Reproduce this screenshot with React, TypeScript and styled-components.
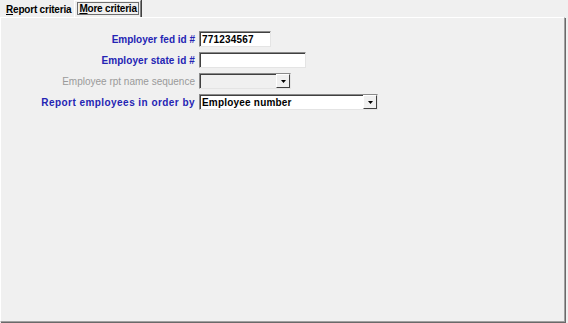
import React from "react";
import styled, { createGlobalStyle } from "styled-components";

const GlobalStyle = createGlobalStyle`
  html, body {
    margin: 0;
    padding: 0;
    background: #f0f0f0;
  }
  body {
    font-family: "Liberation Sans", Arial, sans-serif;
    font-size: 10px;
    width: 568px;
    height: 323px;
    overflow: hidden;
  }
`;

const Window = styled.div`
  width: 568px;
  height: 323px;
  display: flex;
  flex-direction: column;
  background: #f0f0f0;
`;

const TabBar = styled.div`
  display: flex;
  align-items: flex-end;
  height: 17px;
  padding-left: 2px;
`;

const Tab = styled.div<{ $active?: boolean }>`
  font-weight: bold;
  font-size: 10px;
  color: #000;
  padding: ${(p) => (p.$active ? "2px 2px 1px 3px" : "0 2px 1px 4px")};
  height: ${(p) => (p.$active ? "13px" : "12px")};
  line-height: 12px;
  margin-left: ${(p) => (p.$active ? "1px" : "0")};
  border: ${(p) => (p.$active ? "1px solid #808080" : "none")};
  border-left-color: #fff;
  border-top-color: #fff;
  border-bottom: none;
  box-shadow: ${(p) => (p.$active ? "1px 0 0 #404040" : "none")};
  letter-spacing: -0.2px;
  u {
    text-decoration: underline;
  }
`;

const Focus = styled.span`
  outline: 1px solid #707070;
  outline-offset: 0;
  padding: 0 1px;
`;

const Panel = styled.div`
  flex: 1;
  margin-right: 3px;
  margin-bottom: 1px;
  border-top: 1px solid #fff;
  border-left: 1px solid #fff;
  border-right: 1px solid #a0a0a0;
  border-bottom: 1px solid #a0a0a0;
  box-shadow: 1px 1px 0 #696969;
  padding-top: 13px;
`;

const Form = styled.div`
  display: grid;
  grid-template-columns: 194px auto;
  grid-auto-rows: 16px;
  column-gap: 4px;
  row-gap: 5px;
  align-items: center;
`;

const Label = styled.div<{ $disabled?: boolean; $spacing?: number }>`
  text-align: right;
  font-weight: ${(p) => (p.$disabled ? "normal" : "bold")};
  font-size: 10px;
  letter-spacing: ${(p) => p.$spacing ?? 0.2}px;
  color: ${(p) => (p.$disabled ? "#9a9a9a" : "#2424b4")};
  white-space: nowrap;
`;

const Field = styled.div<{ $width: number; $disabled?: boolean }>`
  width: ${(p) => p.$width}px;
  height: 16px;
  box-sizing: border-box;
  display: flex;
  align-items: center;
  background: ${(p) => (p.$disabled ? "#f0f0f0" : "#fff")};
  border-top: 1px solid #8a8a8a;
  border-left: 1px solid #8a8a8a;
  border-right: 1px solid #e4e4e4;
  border-bottom: 1px solid #e4e4e4;
  box-shadow: inset 1px 1px 0 #404040;
  padding-left: 2px;
  font-weight: bold;
  font-size: 10px;
  letter-spacing: 0.2px;
  color: #000;
`;

const Value = styled.span`
  flex: 1;
  white-space: nowrap;
  overflow: hidden;
`;

const ArrowButton = styled.div`
  width: 14px;
  height: 14px;
  box-sizing: border-box;
  display: flex;
  align-items: center;
  justify-content: center;
  background: #f0f0f0;
  border-top: 1px solid #fff;
  border-left: 1px solid #fff;
  border-right: 1px solid #404040;
  border-bottom: 1px solid #404040;
  svg {
    width: 5px;
    height: 3px;
    fill: #000;
  }
`;

const Arrow = () => (
  <ArrowButton>
    <svg viewBox="0 0 5 3">
      <polygon points="0,0 5,0 2.5,3" />
    </svg>
  </ArrowButton>
);

export default function App() {
  return (
    <Window>
      <GlobalStyle />
      <TabBar>
        <Tab>
          <u>R</u>eport criteria
        </Tab>
        <Tab $active>
          <Focus>
            <u>M</u>ore criteria
          </Focus>
        </Tab>
      </TabBar>
      <Panel>
        <Form>
          <Label $spacing={0}>Employer fed id #</Label>
          <Field $width={72}>
            <Value>771234567</Value>
          </Field>

          <Label $spacing={0.1}>Employer state id #</Label>
          <Field $width={107}>
            <Value />
          </Field>

          <Label $disabled $spacing={0}>
            Employee rpt name sequence
          </Label>
          <Field $width={92} $disabled>
            <Value />
            <Arrow />
          </Field>

          <Label $spacing={0.45}>Report employees in order by</Label>
          <Field $width={179}>
            <Value>Employee number</Value>
            <Arrow />
          </Field>
        </Form>
      </Panel>
    </Window>
  );
}
